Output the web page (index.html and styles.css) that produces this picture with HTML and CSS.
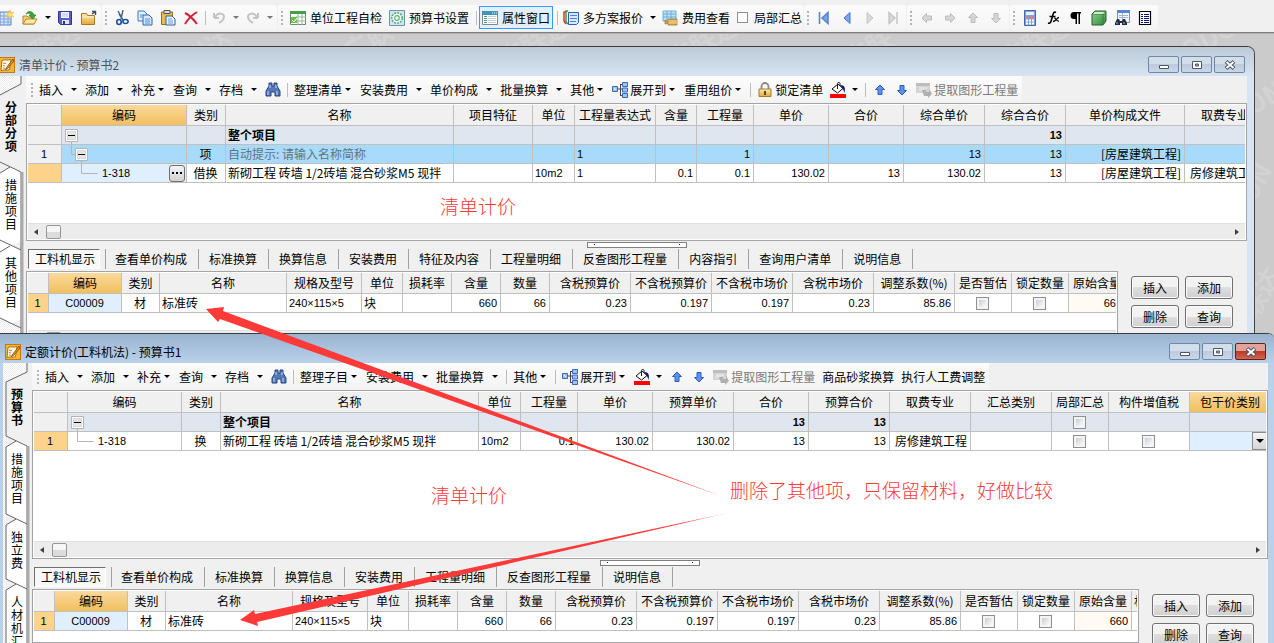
FILE: index.html
```html
<!DOCTYPE html>
<html lang="zh-CN">
<head>
<meta charset="utf-8">
<title>清单计价 - 预算书</title>
<link rel="stylesheet" href="styles.css">
</head>
<body>
<svg class="defs" aria-hidden="true">
  <defs>
    <linearGradient id="gGold" x1="0" y1="0" x2="0" y2="1"><stop offset="0" stop-color="#fdeab0"/><stop offset="1" stop-color="#e2a93b"/></linearGradient>
    <linearGradient id="gGreen" x1="0" y1="0" x2="1" y2="1"><stop offset="0" stop-color="#8fd08f"/><stop offset="1" stop-color="#2f8a3a"/></linearGradient>
    <pattern id="hatch" width="2" height="2" patternUnits="userSpaceOnUse"><rect width="2" height="2" fill="#fff"/><path d="M0 0h1v1H0zM1 1h1v1H1z" fill="#ebebeb"/></pattern>
    <symbol id="i-new" viewBox="0 0 16 16"><path d="M2 2h11v13H2z" fill="#dbe8fb" stroke="#5c80c0"/><path d="M2 6h11M2 9h11M2 12h11M6 2v13M10 2v13" stroke="#7d9fd6"/><path d="M12 0l1 3 3-1-2 2.500 2 2.500-3-1-1 3-1-3-3 1 2-2.500-2-2.500 3 1z" fill="#ffe06a" stroke="#e8b93a" stroke-width=".5"/></symbol>
    <symbol id="i-open" viewBox="0 0 16 16"><path d="M1 14V6h4l1 1h6v7z" fill="#f7d271" stroke="#b8862b"/><path d="M1 14l3-5h11l-3 5z" fill="#fde9a8" stroke="#b8862b"/><path d="M4 4c2-4 7-3 8 1h2l-3.500 4L7 5h2C8.500 3 6 2.500 4 4z" fill="#39a935" stroke="#1b7a20" stroke-width=".6"/></symbol>
    <symbol id="i-save" viewBox="0 0 16 16"><path d="M1.500 1.500h13v13h-11l-2-2z" fill="#5a5fc0" stroke="#31358e"/><path d="M4 2h8v6H4z" fill="#f4f6ff"/><path d="M5 4h6M5 6h6" stroke="#b7bbe6"/><path d="M5 10h7v4H5z" fill="#dfe2f8"/><path d="M6 11h2v3H6z" fill="#31358e"/></symbol>
    <symbol id="i-folder" viewBox="0 0 16 16"><path d="M.5 14.500v-11h5l1 2h7v9z" fill="url(#gGold)" stroke="#a97a25"/><path d="M1 7h12" stroke="#fff3c9"/><path d="M11 4l3-2M11 1.500h3.500V5" fill="none" stroke="#3a4968" stroke-width="1.400"/></symbol>
    <symbol id="i-cut" viewBox="0 0 16 16"><path d="M4 1l5 9M9 0L7 9M5 4l4 6" stroke="#4b5f80" stroke-width="1.400" fill="none"/><ellipse cx="5" cy="12" rx="2.200" ry="2.500" fill="none" stroke="#1c4fa0" stroke-width="1.600"/><ellipse cx="11.500" cy="11.500" rx="2.600" ry="2" fill="none" stroke="#1c4fa0" stroke-width="1.600"/></symbol>
    <symbol id="i-copy" viewBox="0 0 16 16"><path d="M1 1h6l3 3v7H1z" fill="#e3effd" stroke="#3c78c3"/><path d="M6 5h6l3 3v7H6z" fill="#d6e8fc" stroke="#2c67b5"/><path d="M8 9h5M8 11h5M8 13h5M3 5h3M3 7h2" stroke="#5690d2"/></symbol>
    <symbol id="i-paste" viewBox="0 0 16 16"><path d="M1.500 2h11v12.500h-11z" fill="#e7bb53" stroke="#94701f"/><path d="M4 .5h6v3H4z" fill="#d9dde4" stroke="#555"/><path d="M6 6h6l3 3v6H6z" fill="#eaf3fe" stroke="#2f5fa5"/><path d="M8 9h4M8 11h5M8 13h5" stroke="#6c9ad8"/></symbol>
    <symbol id="i-del" viewBox="0 0 16 16"><path d="M2 3c4 2 9 7 12 11M14 2C9 5 5 9 2 14" stroke="#d42036" stroke-width="2" fill="none"/></symbol>
    <symbol id="i-undo" viewBox="0 0 16 16"><path d="M3 8V3M3 8h5M4 7c3-5 9-4 9 0 0 3-2 4-5 6" fill="none" stroke="#c4c4c4" stroke-width="2"/></symbol>
    <symbol id="i-redo" viewBox="0 0 16 16"><path d="M13 8V3M13 8H8M12 7C9 2 3 3 3 7c0 3 2 4 5 6" fill="none" stroke="#c4c4c4" stroke-width="2"/></symbol>
    <symbol id="i-check" viewBox="0 0 16 16"><path d="M.5 1.500h15v13H.5z" fill="#fff" stroke="#6d8a6d"/><path d="M0 1h16v3H0z" fill="#45a045"/><path d="M8 4v11M12 4v11M6 7h10M6 11h10" stroke="#9cb39c"/><path d="M1 7h6v6H1z" fill="#6abf4b"/><path d="M2 10l2 2 3-4" stroke="#fff" fill="none"/></symbol>
    <symbol id="i-gear" viewBox="0 0 16 16"><path d="M.5.5h15v15H.5z" fill="#cfe5ee" stroke="#6b93b5"/><circle cx="8" cy="8" r="5.200" fill="#f7fff7" stroke="#5cae7c" stroke-width="1.600" stroke-dasharray="2 1"/><circle cx="8" cy="8" r="2.300" fill="none" stroke="#5cae7c" stroke-width="1.200"/></symbol>
    <symbol id="i-prop" viewBox="0 0 16 16"><path d="M.5 1.500h15v13H.5z" fill="#fff" stroke="#808890"/><path d="M0 1h16v4H0z" fill="#3f95b8"/><path d="M10 3h1M12 3h1M14 3h1" stroke="#fff"/><path d="M2 6.500h3M2 8.500h3M2 10.500h3M2 12.500h3" stroke="#469c6e"/><path d="M6 6.500h8M6 8.500h8M6 10.500h8M6 12.500h8" stroke="#c3cdd4"/></symbol>
    <symbol id="i-multi" viewBox="0 0 16 16"><path d="M3 2H1v9l2 3" fill="none" stroke="#e0342a" stroke-width="1.500"/><path d="M5 1H3v11l2 2" fill="none" stroke="#36a13c" stroke-width="1.500"/><path d="M5.500 2.500h10v10l-2 2h-8z" fill="#d9e9fc" stroke="#2860c0"/><path d="M7 5.500h7M7 8.500h7M7 11.500h6" stroke="#4d82d4"/></symbol>
    <symbol id="i-fee" viewBox="0 0 16 16"><path d="M1 1h13v10H1z" fill="#bfe3f6" stroke="#6aaed8"/><path d="M1 4h13M1 7h13M5 1v10M9 1v10" stroke="#6aaed8"/><path d="M3 10l4 3-4 1zM6 9h9v6H6z" fill="#dba54a" stroke="#9c6f25" stroke-width=".7"/><path d="M6 11h9M6 13h9" stroke="#f5d890"/></symbol>
    <symbol id="i-first" viewBox="0 0 16 16"><path d="M3.500 2v12M6 8l6-5.500v11z" stroke="#5b83d8" stroke-width="1.600" fill="#7fa4ee"/></symbol>
    <symbol id="i-prev" viewBox="0 0 16 16"><path d="M5 8l6-5.500v11z" stroke="#4471d4" fill="#7fa4ee"/></symbol>
    <symbol id="i-next" viewBox="0 0 16 16"><path d="M11 8L5 2.500v11z" stroke="#c6c6c6" fill="#dadada"/></symbol>
    <symbol id="i-last" viewBox="0 0 16 16"><path d="M12 2v12M10 8L4 2.500v11z" stroke="#c4c4c4" stroke-width="1.400" fill="#dadada"/></symbol>
    <symbol id="i-arrow" viewBox="0 0 16 16"><path d="M8 3l4.500 4.500h-2.500v5H6v-5H3.500z"/></symbol>
    <symbol id="i-calc" viewBox="0 0 16 16"><path d="M2.500.5h11v15h-11z" fill="#7fa4dc" stroke="#4465a5"/><path d="M4 2h8v3H4z" fill="#eaf2fd"/><path d="M4 10.500h8M4 13.500h8" stroke="#fff" stroke-width="2" stroke-dasharray="2 1"/><path d="M4 7.500h8" stroke="#e07878" stroke-width="2" stroke-dasharray="2 1"/></symbol>
    <symbol id="i-fx" viewBox="0 0 16 16"><path d="M11 2.500C8 1 8 5 7 8s-1 6-4 5M4.500 6.500h6" fill="none" stroke="#000" stroke-width="1.600"/><path d="M9 8c2-1 2 4 5 3M14 7.500c-2 0-3 4-6 4" fill="none" stroke="#000" stroke-width="1.300"/></symbol>
    <symbol id="i-para" viewBox="0 0 16 16"><path d="M13 2H6a3.500 3.500 0 000 7h1.500v5H9V3.500h1.500V14H12V3.500h1z" fill="#000"/></symbol>
    <symbol id="i-cube" viewBox="0 0 16 16"><path d="M1 4l3-3h11v10l-3 4H1z" fill="url(#gGreen)" stroke="#2d5c35"/><path d="M1 4h11v11M12 4l3-3" fill="none" stroke="#3a7a44"/><path d="M2 4l2-2h10l-2 2z" fill="#c9efc9"/></symbol>
    <symbol id="i-find" viewBox="0 0 16 16"><path d="M3.500.5h12v12h-12z" fill="#f3f7fd" stroke="#7891be"/><path d="M3 0h13v3H3z" fill="#5b86cf"/><path d="M5 5.500h9M5 7.500h9M8.500 3v9" stroke="#9db3da"/><path d="M3 9h2l1 2h2l1-2h2l2 4v2H8v-2H6v2H1v-2z" fill="#222d42"/><path d="M2 13h2M9 13h2" stroke="#a7b9dc"/></symbol>
    <symbol id="i-list" viewBox="0 0 16 16"><path d="M2.500 1.500h11v13h-11z" fill="#fff" stroke="#000" stroke-width="1.200"/><path d="M4 4.500h2M4 6.500h2M4 8.500h2M4 10.500h2M4 12.500h2M7 4.500h5M7 6.500h5M7 8.500h5M7 10.500h5M7 12.500h5" stroke="#10107a"/></symbol>
    <symbol id="i-book" viewBox="0 0 16 16"><path d="M0 0h16v16H0z" fill="#c9780a"/><path d="M1 1h14v14H1z" fill="#f5b634"/><path d="M3 3.500c3-1.500 5 .5 9-1l-1.500 10C8 14 6 12 2 13.500z" fill="#fffae6" stroke="#9a560f" stroke-width=".8"/><path d="M4 6l3 .5M4 8.500l2 .5M4 11l2 .3" stroke="#a8621a" stroke-width=".8"/><path d="M14 2L7.500 10.500l-1 2 2-1L15 4z" fill="#e8921b" stroke="#8a4407" stroke-width=".8"/></symbol>
    <symbol id="i-bino" viewBox="0 0 16 16"><path d="M4 1h3v3h2V1h3v3l3 5v5h-5v-4H6v4H1V9l3-5z" fill="#5477b8" stroke="#28457f"/><path d="M3 9v4M12 9v4M5 3v3M11 3v3" stroke="#c8d9f5"/></symbol>
    <symbol id="i-tree" viewBox="0 0 16 16"><path d="M6 7h4M8.500 3v10M8 2.500h3M8 13.500h3" stroke="#444" fill="none"/><path d="M.5 4.500h5v5h-5zM10.500.5h5v4h-5zM10.500 6h5v4h-5zM10.500 11.500h5v4h-5z" fill="#9ec3f6" stroke="#3c67b4"/><path d="M2 6l2 2" stroke="#fff"/></symbol>
    <symbol id="i-lock" viewBox="0 0 16 16"><path d="M4.500 8V4.500a3.500 3.500 0 017 0V8" fill="none" stroke="#8b8b8b" stroke-width="1.800"/><path d="M2 7h12v7.500H2z" fill="url(#gGold)" stroke="#a77b28"/><path d="M8 9v4" stroke="#4b3a15" stroke-width="1.800"/></symbol>
    <symbol id="i-fill" viewBox="0 0 16 16"><path d="M2 7l6-5 5 4.500-5.500 4.500z" fill="#fff" stroke="#111"/><path d="M7.500 7V1.500c0-1.500 2.500-1.500 2.500 0V4" fill="none" stroke="#10107a"/><path d="M10 3c5 0 5.500 3 4.500 8l-1.500-4z" fill="#10107a"/><path d="M0 12h16v4H0z" fill="#f00"/></symbol>
    <symbol id="i-ext" viewBox="0 0 16 16"><path d="M0 1h14v10H0z" fill="#d4d4d4"/><path d="M0 1h14v3H0z" fill="#bdbdbd"/><path d="M3 6h8M3 8h5" stroke="#f2f2f2"/><path d="M6 8h4v2h3V7l3 5-4 4v-2H8z" fill="#b0b0b0"/></symbol>
    <symbol id="i-min" viewBox="0 0 16 12"><path d="M3.500 6.500h9v3h-9z" fill="#fff" stroke="#4c5668"/></symbol>
    <symbol id="i-max" viewBox="0 0 16 12"><path d="M3.500 2.500h9v7h-9z" fill="#fff" stroke="#4c5668"/><path d="M6.500 5h3v2h-3z" fill="#9fb2cc" stroke="#4c5668"/></symbol>
    <symbol id="i-close" viewBox="0 0 16 12"><path d="M4 2.500l8 7M12 2.500l-8 7" stroke="#4c5668" stroke-width="4"/><path d="M4.500 3l7 6M11.500 3l-7 6" stroke="#fff" stroke-width="2"/></symbol>
    <symbol id="i-minus" viewBox="0 0 13 13"><path d="M.5.500h12v12H.5z" fill="#fff" stroke="#b4b4b4"/><path d="M2.500 2.500h8v8h-8z" fill="#e4e6ea" stroke="#d8d8d8"/><path d="M3 6.500h7" stroke="#000"/></symbol>
  </defs>
</svg>

<header class="mainbar">
  <div class="group group-first">
    <button class="ib wide" aria-label="新建"><svg class="ic"><use href="#i-new"/></svg></button>
    <button class="ib wide" aria-label="打开"><svg class="ic"><use href="#i-open"/></svg></button>
    <button class="drop" aria-label="打开列表"><i class="caret"></i></button>
    <button class="ib wide" aria-label="保存"><svg class="ic"><use href="#i-save"/></svg></button>
    <button class="ib wide" aria-label="文件夹"><svg class="ic"><use href="#i-folder"/></svg></button>
  </div>
  <div class="group">
    <i class="grip"></i>
    <button class="ib" aria-label="剪切"><svg class="ic"><use href="#i-cut"/></svg></button>
    <button class="ib" aria-label="复制"><svg class="ic"><use href="#i-copy"/></svg></button>
    <button class="ib" aria-label="粘贴"><svg class="ic"><use href="#i-paste"/></svg></button>
    <button class="ib" aria-label="删除"><svg class="ic"><use href="#i-del"/></svg></button>
    <i class="sep"></i>
    <button class="ib" aria-label="撤销"><svg class="ic"><use href="#i-undo"/></svg></button>
    <button class="drop dim" aria-label="撤销列表"><i class="caret"></i></button>
    <button class="ib" aria-label="恢复"><svg class="ic"><use href="#i-redo"/></svg></button>
    <button class="drop dim" aria-label="恢复列表"><i class="caret"></i></button>
  </div>
  <div class="group group-text">
    <i class="grip"></i>
    <button class="lb"><svg class="ic"><use href="#i-check"/></svg>单位工程自检</button>
    <button class="lb"><svg class="ic"><use href="#i-gear"/></svg>预算书设置</button>
    <i class="sep"></i>
    <button class="lb lb-on"><svg class="ic"><use href="#i-prop"/></svg>属性窗口</button>
    <i class="sep"></i>
    <button class="lb"><svg class="ic"><use href="#i-multi"/></svg>多方案报价</button>
    <button class="drop" aria-label="多方案报价列表"><i class="caret"></i></button>
    <button class="lb"><svg class="ic"><use href="#i-fee"/></svg>费用查看</button>
    <label class="chk"><input type="checkbox" class="cb cb-small">局部汇总</label>
  </div>
  <div class="group">
    <i class="grip"></i>
    <button class="ib" aria-label="首条"><svg class="ic"><use href="#i-first"/></svg></button>
    <button class="ib" aria-label="上一条"><svg class="ic"><use href="#i-prev"/></svg></button>
    <button class="ib" aria-label="下一条"><svg class="ic"><use href="#i-next"/></svg></button>
    <button class="ib" aria-label="末条"><svg class="ic"><use href="#i-last"/></svg></button>
  </div>
  <div class="group">
    <i class="grip"></i>
    <button class="ib" aria-label="左移"><svg class="ic ar off left"><use href="#i-arrow"/></svg></button>
    <button class="ib" aria-label="右移"><svg class="ic ar off right"><use href="#i-arrow"/></svg></button>
    <button class="ib" aria-label="上移"><svg class="ic ar off"><use href="#i-arrow"/></svg></button>
    <button class="ib" aria-label="下移"><svg class="ic ar off down"><use href="#i-arrow"/></svg></button>
  </div>
  <div class="group">
    <i class="grip"></i>
    <button class="ib" aria-label="计算器"><svg class="ic"><use href="#i-calc"/></svg></button>
    <button class="ib" aria-label="函数"><svg class="ic"><use href="#i-fx"/></svg></button>
    <button class="ib" aria-label="段落"><svg class="ic"><use href="#i-para"/></svg></button>
    <button class="ib" aria-label="图形"><svg class="ic"><use href="#i-cube"/></svg></button>
    <button class="ib" aria-label="查找"><svg class="ic"><use href="#i-find"/></svg></button>
    <button class="ib" aria-label="列表"><svg class="ic"><use href="#i-list"/></svg></button>
  </div>
</header>

<main class="desktop">
  <svg class="watermark" aria-hidden="true">
    <g class="wm">
      <text transform="translate(14 42) rotate(-30)">广联达</text>
      <text transform="translate(190 36) rotate(-30)">联达</text>
      <text transform="translate(350 28) rotate(-30)">广联</text>
      <text transform="translate(505 36) rotate(-30)">广联达</text>
      <text transform="translate(674 36) rotate(-30)">广联达</text>
      <text transform="translate(850 36) rotate(-30)">广联</text>
      <text transform="translate(1006 36) rotate(-30)">广联达</text>
      <text transform="translate(1160 44) rotate(-30)">GLODON</text>
      <text transform="translate(1252 82) rotate(-30)">ON</text>
      <text transform="translate(1254 170) rotate(-60)">ON</text>
      <text transform="translate(1256 286) rotate(-60)">联达</text>
    </g>
  </svg>

  <section class="win win-back">
    <div class="titlebar">
      <svg class="ic"><use href="#i-book"/></svg>
      <h2>清单计价 - 预算书2</h2>
      <button class="wb" aria-label="最小化"><svg><use href="#i-min"/></svg></button>
      <button class="wb" aria-label="最大化"><svg><use href="#i-max"/></svg></button>
      <button class="wb" aria-label="关闭"><svg><use href="#i-close"/></svg></button>
    </div>
    <div class="client">
      <nav class="side">
        <svg class="side-art" aria-hidden="true"><path d="M0 0h21v8L0 19z" fill="url(#hatch)"/><path d="M0 97l10-6 11 5v69l-21 10z" fill="#fff"/><path d="M0 175l10-6 11 5v69l-21 9z" fill="#fff"/><path d="M21 251v30H0v-40z" fill="url(#hatch)"/><path d="M21 0v8L0 19M0 86l21 10v78M0 97l10-6M0 164l21 10v78l-21-10M0 176l10-6M21 252v40" class="ln"/><path d="M22.500 96v200" class="shade"/></svg>
        <button class="vt vt-on">分部分项</button>
        <button class="vt">措施项目</button>
        <button class="vt">其他项目</button>
      </nav>
      <div class="work">
        <div class="toolbar">
          <i class="grip"></i>
          <button class="tb">插入<i class="caret"></i></button>
          <button class="tb">添加<i class="caret"></i></button>
          <button class="tb menu">补充<i class="caret"></i></button>
          <button class="tb">查询<i class="caret"></i></button>
          <button class="tb">存档<i class="caret"></i></button>
          <button class="ti" aria-label="查找"><svg class="ic"><use href="#i-bino"/></svg></button>
          <i class="sep"></i>
          <button class="tb menu">整理清单<i class="caret"></i></button>
          <button class="tb">安装费用<i class="caret"></i></button>
          <button class="tb">单价构成<i class="caret"></i></button>
          <button class="tb">批量换算<i class="caret"></i></button>
          <button class="tb menu">其他<i class="caret"></i></button>
          <button class="tb menu"><svg class="ic"><use href="#i-tree"/></svg>展开到<i class="caret"></i></button>
          <button class="tb menu">重用组价<i class="caret"></i></button>
          <i class="sep"></i>
          <button class="tb plain"><svg class="ic"><use href="#i-lock"/></svg>锁定清单</button>
          <button class="tb tight" aria-label="填充颜色"><svg class="ic"><use href="#i-fill"/></svg><i class="caret"></i></button>
          <i class="sep"></i>
          <button class="ti" aria-label="上移"><svg class="ic ar"><use href="#i-arrow"/></svg></button>
          <button class="ti" aria-label="下移"><svg class="ic ar down"><use href="#i-arrow"/></svg></button>
          <button class="tb plain" disabled><svg class="ic"><use href="#i-ext"/></svg>提取图形工程量</button>
        </div>

        <div class="grid grid-a">
          <table>
            <colgroup><col class="w34"><col class="w125"><col class="w39"><col class="w228"><col class="w79"><col class="w42"><col class="w81"><col class="w41"><col class="w57"><col class="w75"><col class="w75"><col class="w81"><col class="w81"><col class="w119"><col class="w81"></colgroup>
            <thead><tr><th></th><th class="hot">编码</th><th>类别</th><th>名称</th><th>项目特征</th><th>单位</th><th>工程量表达式</th><th>含量</th><th>工程量</th><th>单价</th><th>合价</th><th>综合单价</th><th>综合合价</th><th>单价构成文件</th><th>取费专业</th></tr></thead>
            <tbody>
              <tr class="total"><td class="rh"></td><td><span class="node"><svg class="twig" viewBox="0 0 38 18"><path d="M9.500 13v5"/><use href="#i-minus" x="3" y="3" width="13" height="13"/></svg></span></td><td></td><td>整个项目</td><td></td><td></td><td></td><td></td><td></td><td></td><td></td><td></td><td class="n">13</td><td></td><td></td></tr>
              <tr class="sel"><td class="rh n">1</td><td><span class="node"><svg class="twig" viewBox="0 0 38 18"><path d="M9.500 0v9.500h5M19.500 13v5"/><use href="#i-minus" x="13" y="3" width="13" height="13"/></svg></span></td><td class="c">项</td><td class="hint">自动提示: 请输入名称简称</td><td></td><td></td><td class="l">1</td><td></td><td class="n">1</td><td></td><td></td><td class="n">13</td><td class="n">13</td><td class="r">[房屋建筑工程]</td><td></td></tr>
              <tr><td class="rh now"></td><td class="cur"><span class="node"><svg class="twig" viewBox="0 0 38 18"><path d="M19.500 0v9.500h16"/></svg><span class="num">1-318</span><button class="more" aria-label="更多"><svg viewBox="0 0 12 12"><path d="M1 5h2v2H1zM5 5h2v2H5zM9 5h2v2H9z"/></svg></button></span></td><td class="c">借换</td><td>新砌工程 砖墙 1/2砖墙 混合砂浆M5 现拌</td><td></td><td class="l">10m2</td><td class="l">1</td><td class="n">0.1</td><td class="n">0.1</td><td class="n">130.02</td><td class="n">13</td><td class="n">130.02</td><td class="n">13</td><td class="r">[房屋建筑工程]</td><td class="ind">房修建筑工程</td></tr>
            </tbody>
          </table>
          <div class="hscroll"><i class="sa sa-l"></i><i class="thumb"></i><i class="sa sa-r"></i></div>
        </div>

        <div class="tabrow">
          <i class="handle"></i>
          <button class="pt pt-on">工料机显示</button><button class="pt">查看单价构成</button><button class="pt">标准换算</button><button class="pt">换算信息</button><button class="pt">安装费用</button><button class="pt">特征及内容</button><button class="pt">工程量明细</button><button class="pt">反查图形工程量</button><button class="pt">内容指引</button><button class="pt">查询用户清单</button><button class="pt">说明信息</button>
        </div>

        <div class="lower">
          <div class="grid grid-b">
            <table>
              <colgroup><col class="w21"><col class="w73"><col class="w38"><col class="w127"><col class="w75"><col class="w41"><col class="w49"><col class="w49"><col class="w49"><col class="w81"><col class="w81"><col class="w81"><col class="w81"><col class="w81"><col class="w57"><col class="w57"><col class="w57"></colgroup>
              <thead><tr><th></th><th class="hot">编码</th><th>类别</th><th>名称</th><th>规格及型号</th><th>单位</th><th>损耗率</th><th>含量</th><th>数量</th><th>含税预算价</th><th>不含税预算价</th><th>不含税市场价</th><th>含税市场价</th><th>调整系数(%)</th><th>是否暂估</th><th>锁定数量</th><th>原始含量</th></tr></thead>
              <tbody><tr><td class="rh now n">1</td><td class="cur c num">C00009</td><td class="c">材</td><td>标准砖</td><td class="l">240×115×5</td><td>块</td><td></td><td class="n">660</td><td class="n">66</td><td class="n">0.23</td><td class="n">0.197</td><td class="n">0.197</td><td class="n">0.23</td><td class="n">85.86</td><td class="c"><input type="checkbox" class="cb" aria-label="是否暂估"></td><td class="c"><input type="checkbox" class="cb" aria-label="锁定数量"></td><td class="n warm">660</td></tr></tbody>
            </table>
            <div class="hscroll"><i class="sa sa-l"></i><i class="thumb"></i></div>
          </div>
          <div class="actions"><button>插入</button><button>添加</button><button>删除</button><button>查询</button></div>
        </div>
      </div>
    </div>
  </section>

  <section class="win win-front">
    <div class="titlebar">
      <svg class="ic"><use href="#i-book"/></svg>
      <h2>定额计价(工料机法) - 预算书1</h2>
      <button class="wb" aria-label="最小化"><svg><use href="#i-min"/></svg></button>
      <button class="wb" aria-label="最大化"><svg><use href="#i-max"/></svg></button>
      <button class="wb wb-close" aria-label="关闭"><svg><use href="#i-close"/></svg></button>
    </div>
    <div class="client">
      <nav class="side">
        <svg class="side-art" aria-hidden="true"><path d="M0 0h24v9L3 19v300H0z" fill="url(#hatch)"/><path d="M3 84l10-6 11 5v78L3 151z" fill="#fff"/><path d="M3 162l10-6 11 5v65L3 216z" fill="#fff"/><path d="M3 227l10-6 11 5v70H3z" fill="#fff"/><path d="M24 0v9L3 19v54l21 10v78L3 151V84l10-6M3 162l10-6M3 162v54l21 10v-65M3 227l10-6M3 227v60M24 226v60" class="ln"/><path d="M25.500 83v210" class="shade"/></svg>
        <button class="vt vt-on">预算书</button>
        <button class="vt">措施项目</button>
        <button class="vt">独立费</button>
        <button class="vt">人材机汇总</button>
      </nav>
      <div class="work">
        <div class="toolbar">
          <i class="grip"></i>
          <button class="tb">插入<i class="caret"></i></button>
          <button class="tb">添加<i class="caret"></i></button>
          <button class="tb menu">补充<i class="caret"></i></button>
          <button class="tb">查询<i class="caret"></i></button>
          <button class="tb">存档<i class="caret"></i></button>
          <button class="ti" aria-label="查找"><svg class="ic"><use href="#i-bino"/></svg></button>
          <i class="sep"></i>
          <button class="tb menu">整理子目<i class="caret"></i></button>
          <button class="tb">安装费用<i class="caret"></i></button>
          <button class="tb">批量换算<i class="caret"></i></button>
          <i class="sep"></i>
          <button class="tb menu">其他<i class="caret"></i></button>
          <i class="sep"></i>
          <button class="tb menu"><svg class="ic"><use href="#i-tree"/></svg>展开到<i class="caret"></i></button>
          <button class="tb tight" aria-label="填充颜色"><svg class="ic"><use href="#i-fill"/></svg><i class="caret"></i></button>
          <button class="ti" aria-label="上移"><svg class="ic ar"><use href="#i-arrow"/></svg></button>
          <button class="ti" aria-label="下移"><svg class="ic ar down"><use href="#i-arrow"/></svg></button>
          <button class="tb plain" disabled><svg class="ic"><use href="#i-ext"/></svg>提取图形工程量</button>
          <button class="tb plain">商品砂浆换算</button>
          <button class="tb plain">执行人工费调整</button>
        </div>

        <div class="grid grid-c">
          <table>
            <colgroup><col class="w34"><col class="w114"><col class="w39"><col class="w258"><col class="w42"><col class="w57"><col class="w75"><col class="w81"><col class="w75"><col class="w81"><col class="w81"><col class="w81"><col class="w57"><col class="w81"><col class="w81"></colgroup>
            <thead><tr><th></th><th>编码</th><th>类别</th><th>名称</th><th>单位</th><th>工程量</th><th>单价</th><th>预算单价</th><th>合价</th><th>预算合价</th><th>取费专业</th><th>汇总类别</th><th>局部汇总</th><th>构件增值税</th><th class="hot">包干价类别</th></tr></thead>
            <tbody>
              <tr class="total"><td class="rh"></td><td><span class="node"><svg class="twig" viewBox="0 0 38 18"><path d="M9.500 13v5"/><use href="#i-minus" x="3" y="3" width="13" height="13"/></svg></span></td><td></td><td>整个项目</td><td></td><td></td><td></td><td></td><td class="n">13</td><td class="n">13</td><td></td><td></td><td class="c"><input type="checkbox" class="cb" aria-label="局部汇总"></td><td></td><td></td></tr>
              <tr><td class="rh now n">1</td><td><span class="node"><svg class="twig twig-near" viewBox="0 0 28 18"><path d="M9.500 0v9.500h16"/></svg><span class="num">1-318</span></span></td><td class="c">换</td><td>新砌工程 砖墙 1/2砖墙 混合砂浆M5 现拌</td><td class="l">10m2</td><td class="n">0.1</td><td class="n">130.02</td><td class="n">130.02</td><td class="n">13</td><td class="n">13</td><td class="ind">房修建筑工程</td><td></td><td class="c"><input type="checkbox" class="cb" aria-label="局部汇总"></td><td class="c"><input type="checkbox" class="cb" aria-label="构件增值税"></td><td class="cur pick"><select aria-label="包干价类别"><option></option></select><i class="pick-btn"><i class="caret"></i></i></td></tr>
            </tbody>
          </table>
          <div class="hscroll"><i class="sa sa-l"></i><i class="thumb"></i><i class="sa sa-r"></i></div>
        </div>

        <div class="tabrow">
          <i class="handle"></i>
          <button class="pt pt-on">工料机显示</button><button class="pt">查看单价构成</button><button class="pt">标准换算</button><button class="pt">换算信息</button><button class="pt">安装费用</button><button class="pt">工程量明细</button><button class="pt">反查图形工程量</button><button class="pt">说明信息</button>
        </div>

        <div class="lower">
          <div class="grid grid-b">
            <table>
              <colgroup><col class="w21"><col class="w73"><col class="w38"><col class="w127"><col class="w75"><col class="w41"><col class="w49"><col class="w49"><col class="w49"><col class="w81"><col class="w81"><col class="w81"><col class="w81"><col class="w81"><col class="w57"><col class="w57"><col class="w57"><col class="w21"></colgroup>
              <thead><tr><th></th><th class="hot">编码</th><th>类别</th><th>名称</th><th>规格及型号</th><th>单位</th><th>损耗率</th><th>含量</th><th>数量</th><th>含税预算价</th><th>不含税预算价</th><th>不含税市场价</th><th>含税市场价</th><th>调整系数(%)</th><th>是否暂估</th><th>锁定数量</th><th>原始含量</th><th class="cutoff">材</th></tr></thead>
              <tbody><tr><td class="rh now n">1</td><td class="cur c num">C00009</td><td class="c">材</td><td>标准砖</td><td class="l">240×115×5</td><td>块</td><td></td><td class="n">660</td><td class="n">66</td><td class="n">0.23</td><td class="n">0.197</td><td class="n">0.197</td><td class="n">0.23</td><td class="n">85.86</td><td class="c"><input type="checkbox" class="cb" aria-label="是否暂估"></td><td class="c"><input type="checkbox" class="cb" aria-label="锁定数量"></td><td class="n warm">660</td><td></td></tr></tbody>
            </table>
          </div>
          <div class="actions"><button>插入</button><button>添加</button><button>删除</button><button>查询</button></div>
        </div>
      </div>
    </div>
  </section>
</main>

<svg class="arrows" aria-hidden="true">
  <defs>
    <linearGradient id="fade" x1="0" x2="1"><stop offset=".9" stop-color="#fd3a38"/><stop offset="1" stop-color="#fd3a38" stop-opacity=".2"/></linearGradient>
  </defs>
  <path d="M206 309l18-2-1 4 498 185-501-177-2 3z" fill="#fd3a38"/>
  <path d="M240 620l14-10 1 4 477-102-475 110 1 4z" fill="url(#fade)"/>
</svg>
<p class="note note-1">清单计价</p>
<p class="note note-2">清单计价</p>
<p class="note note-3">删除了其他项，只保留材料，好做比较</p>
</body>
</html>
```

FILE: styles.css
```css
* { box-sizing: border-box; }
body {
  margin: 0;
  height: 100vh;
  overflow: hidden;
  position: relative;
  display: flex;
  flex-direction: column;
  background: #f0f0f0;
  color: #000;
  font: 12px/18px "Noto Sans CJK SC", sans-serif;
}
button, input, select { font: inherit; color: inherit; margin: 0; }
button { padding: 0; border: 0; background: none; white-space: nowrap; }
.defs { position: absolute; width: 0; height: 0; }
.ic { width: 16px; height: 16px; flex: none; display: block; }
.caret {
  flex: none;
  width: 0;
  height: 0;
  border: 3px solid transparent;
  border-top-color: #000;
  border-bottom: 0;
}
.grip {
  flex: none;
  width: 8px;
  height: 14px;
  background: repeating-linear-gradient(#b4b4b4 0 2px, transparent 2px 4px) 3px 0 / 2px 100% no-repeat;
}
.sep { flex: none; width: 5px; height: 14px; background: linear-gradient(#bdbdbd, #bdbdbd) 3px 0 / 1px 100% no-repeat; }
.ar { fill: #5f92ea; stroke: #2a5cc4; stroke-width: 1px; }
.ar.off { fill: #d6d6d6; stroke: #bcbcbc; }
.left { transform: rotate(-90deg); }
.right { transform: rotate(90deg); }
.down { transform: rotate(180deg); }

/* main toolbar */
.mainbar {
  flex: none;
  display: flex;
  gap: 1px;
  height: 33px;
  padding-top: 5px;
  border-bottom: 1px solid #808080;
}
.group {
  display: flex;
  align-items: center;
  height: 25px;
  padding-right: 2px;
  border-radius: 2px;
  background: linear-gradient(#fcfcfc, #f4f4f4);
}
.group-first { margin-left: -6px; padding-right: 0; }
.group-text { gap: 1px; padding-right: 0; }
.ib { width: 23px; height: 22px; display: flex; align-items: center; justify-content: center; }
.wide { width: 24px; }
.drop { width: 11px; height: 22px; display: flex; align-items: center; justify-content: center; }
.dim .caret { border-top-color: #777; }
.lb {
  display: flex;
  align-items: center;
  gap: 4px;
  height: 23px;
  padding: 0 2px;
  border: 1px solid transparent;
}
.lb-on { border-color: #3399ff; background: #e3effb; }
.chk { display: flex; align-items: center; gap: 6px; padding: 0 1px 0 3px; }

.cb {
  appearance: none;
  display: inline-block;
  vertical-align: top;
  width: 13px;
  height: 13px;
  margin-top: 3px;
  border: 1px solid #8e8f8f;
  background: linear-gradient(135deg, #c9ced4, #fbfbfb) 50% 50% / 7px 7px no-repeat #f4f4f4;
}
.cb-small { width: 11px; height: 11px; margin-top: 0; background: #fff; }

/* desktop and windows */
.desktop { flex: 1; position: relative; overflow: hidden; background: #cbcbcb; border-top: 1px solid #b0b0b0; }
.watermark { position: absolute; left: 0; top: 0; width: 100%; height: 100%; }
.wm { fill: #d3d3d3; font-size: 26px; font-weight: 700; }
.win {
  position: absolute;
  left: 0;
  display: flex;
  flex-direction: column;
  border-top: 1px solid #3c3c3c;
  overflow: hidden;
}
.win-back { top: 12px; right: 19px; height: 300px; padding-right: 7px; border-right: 1px solid #444; border-radius: 0 8px 0 0; background: #d7e4f1; }
.win-front { top: 299px; right: 0; bottom: 0; padding: 0 6px 0 3px; border-radius: 0 6px 0 0; background: #b9d1ea; }
.titlebar {
  flex: none;
  display: flex;
  align-items: center;
  gap: 2px;
  height: 29px;
  padding-top: 6px;
}
.win-back .titlebar { margin: 0 -7px 0 0; padding-right: 9px; background: linear-gradient(#bccad8, #d7e4f1); color: #4b535c; }
.win-back .titlebar .ic { margin-left: -1px; }
.win-front .titlebar { margin: 0 -6px 0 -3px; padding: 6px 8px 0 5px; background: linear-gradient(#9ab3d0, #b9d1ea); }
.titlebar h2 { flex: 1; margin: 0; padding-left: 2px; font-size: 12px; font-weight: 400; line-height: 16px; }
.wb {
  width: 31px;
  height: 17px;
  display: flex;
  align-items: center;
  justify-content: center;
  border: 1px solid #7187a8;
  border-radius: 2px;
  background: linear-gradient(#d3deeb 45%, #bccbdd 50%, #cad7e6);
}
.wb svg { width: 16px; height: 12px; }
.wb-close { border-color: #6b1f1b; background: linear-gradient(#e2a49a 45%, #bd3a28 50%, #cf6750); }
.client { flex: 1; min-height: 0; display: flex; background: #f0f0f0; }

/* side tabs */
.side { position: relative; flex: none; width: 26px; display: flex; flex-direction: column; align-items: flex-start; gap: 26px; padding: 24px 0 0 4px; overflow: hidden; }
.win-front .side { width: 29px; padding: 24px 0 0 7px; }
.side-art { position: absolute; left: 0; top: 0; width: 100%; height: 100%; }
.ln { fill: none; stroke: #666; }
.shade { fill: none; stroke: #aaa; stroke-width: 2px; }
.vt { position: relative; width: 14px; line-height: 13px; white-space: normal; word-break: break-all; }
.vt-on { font-weight: 700; }

/* window toolbar */
.work { flex: 1; min-width: 0; display: flex; flex-direction: column; }
.toolbar {
  flex: none;
  align-self: flex-start;
  display: flex;
  align-items: center;
  height: 27px;
  padding-left: 2px;
  background: linear-gradient(#fcfcfc, #f3f3f3);
}
.toolbar .sep { width: 7px; }
.tb { display: flex; align-items: center; height: 22px; padding-left: 3px; }
.tb .ic { margin-right: 2px; }
.tb .caret { margin: 0 5px 0 8px; }
.tb.menu .caret { margin: 0 6px 0 3px; }
.tb.tight .caret { margin: 0 4px; }
.tb.plain { padding-right: 4px; }
.tb:disabled { color: #7a7a7a; }
.ti { width: 22px; height: 22px; display: flex; align-items: center; justify-content: center; }

/* data grids */
.grid {
  display: flex;
  flex-direction: column;
  justify-content: space-between;
  padding: 1px;
  border: 1px solid #a3a3a8;
  background: #fff;
  overflow: clip;
  overflow-clip-margin: content-box;
}
.grid-a { flex: none; height: 138px; }
.grid-c { flex: none; height: 169px; }
.grid-b { flex: 1; min-width: 0; }
table { flex: none; align-self: flex-start; width: 0; table-layout: fixed; border-collapse: separate; border-spacing: 0; }
th, td {
  padding: 0 3px 0 2px;
  border-right: 1px solid #c0c0c0;
  border-bottom: 1px solid #c0c0c0;
  overflow: hidden;
  white-space: nowrap;
  text-align: left;
  font-weight: 400;
}
th { height: 21px; padding: 0; line-height: 20px; background: #f0f0f0; text-align: center; }
th.cutoff { padding-left: 2px; text-align: left; }
td { height: 19px; line-height: 18px; }
.hot { background: linear-gradient(#fbd89c, #f1c05e); }
.total td { background: #dfe6f0; font-weight: 700; }
.sel td { background: #a8dbfb; }
.sel .hint { color: #5f7482; }
td.c { text-align: center; }
td.r, td.n { text-align: right; }
td.rh, .total td.rh, .sel td.rh { background: #f0f0f0; text-align: center; }
td.rh.now { background: #fdd38c; }
td.cur { background: #e0effe; }
td.warm { background: #fffaf4; }
td.n, td.l, .num { font-family: "Liberation Sans", "Noto Sans CJK SC", sans-serif; font-size: 11px; }
td.ind { padding-left: 5px; }
.node { display: flex; align-items: center; height: 18px; margin: 0 -3px 0 -2px; }
.twig { flex: none; width: 38px; height: 18px; margin-right: 2px; fill: none; stroke: #b4b4b4; }
.twig-near { width: 28px; }
.more {
  width: 16px;
  height: 17px;
  margin: 0 1px 0 auto;
  border: 1px solid #707070;
  border-radius: 3px;
  background: linear-gradient(#f4f4f4, #d2d2d2);
}
.more svg { display: block; width: 12px; height: 12px; margin: 0 auto; }
.pick { position: relative; }
.pick select { appearance: none; display: block; width: 100%; height: 18px; border: 0; background: none; }
.pick-btn {
  position: absolute;
  right: 0;
  top: 0;
  width: 18px;
  height: 18px;
  display: flex;
  align-items: center;
  padding-left: 3px;
  border: 1px solid #8a8a8a;
  background: linear-gradient(#f4f4f4, #d6d6d6);
  pointer-events: none;
}
.pick-btn .caret { border-width: 4px; border-bottom: 0; }

.w21 { width: 21px; }
.w34 { width: 34px; }
.w38 { width: 38px; }
.w39 { width: 39px; }
.w41 { width: 41px; }
.w42 { width: 42px; }
.w49 { width: 49px; }
.w57 { width: 57px; }
.w73 { width: 73px; }
.w75 { width: 75px; }
.w79 { width: 79px; }
.w81 { width: 81px; }
.w114 { width: 114px; }
.w119 { width: 119px; }
.w125 { width: 125px; }
.w127 { width: 127px; }
.w228 { width: 228px; }
.w258 { width: 258px; }

.hscroll { flex: none; display: flex; align-items: center; height: 16px; padding: 0 6px; background: #ececec; border-top: 1px solid #e0e0e0; }
.thumb { width: 15px; height: 14px; margin-left: 8px; border: 1px solid #979797; border-radius: 2px; background: linear-gradient(#f6f6f6 50%, #dcdcdc 50%); }
.sa { width: 0; height: 0; border: 3px solid transparent; }
.sa-l { border-right: 4px solid #404040; border-left: 0; }
.sa-r { margin-left: auto; border-left: 4px solid #404040; border-right: 0; }

/* detail tabs */
.tabrow { position: relative; flex: none; display: flex; height: 30px; padding: 8px 0 2px 2px; }
.handle {
  position: absolute;
  left: 50%;
  top: 1px;
  width: 100px;
  height: 6px;
  margin-left: -50px;
  border: 1px solid #808080;
  background: linear-gradient(90deg, transparent 6px, #10107a 6px 7px, transparent 7px 91px, #10107a 91px 92px, transparent 92px) 0 1px / 100% 1px no-repeat #fff;
}
.pt { padding: 0 11px 0 10px; border-right: 1px solid #a0a0a0; line-height: 20px; }
.pt-on {
  margin-right: 5px;
  padding: 0 4px 0 6px;
  border: 1px solid #fff;
  border-top-color: #707070;
  border-left-color: #707070;
  background: #f8f8f8;
  line-height: 18px;
  box-shadow: 5px 0 0 #f0f0f0, 6px 0 0 #a0a0a0;
}

.lower { flex: 1; min-height: 0; display: flex; }
.win-back .lower { flex: none; height: 77px; }
.actions {
  flex: none;
  display: grid;
  grid-template-columns: 48px 48px;
  grid-auto-rows: 23px;
  align-content: start;
  gap: 6px;
  width: 129px;
  padding: 5px 0 0 13px;
}
.actions button { border: 1px solid #707070; border-radius: 3px; background: linear-gradient(#f3f3f3 50%, #dedede 50%, #d0d0d0); box-shadow: inset 0 0 0 1px #fafafa; }

/* annotations drawn over the windows */
.arrows { position: absolute; left: 0; top: 0; width: 100%; height: 100%; pointer-events: none; }
.note { position: absolute; margin: 0; color: #fd3a38; font-size: 19px; font-weight: 300; line-height: 24px; white-space: nowrap; }
.note-1 { left: 440px; top: 194px; }
.note-2 { left: 431px; top: 483px; }
.note-3 { left: 730px; top: 478px; }
```
